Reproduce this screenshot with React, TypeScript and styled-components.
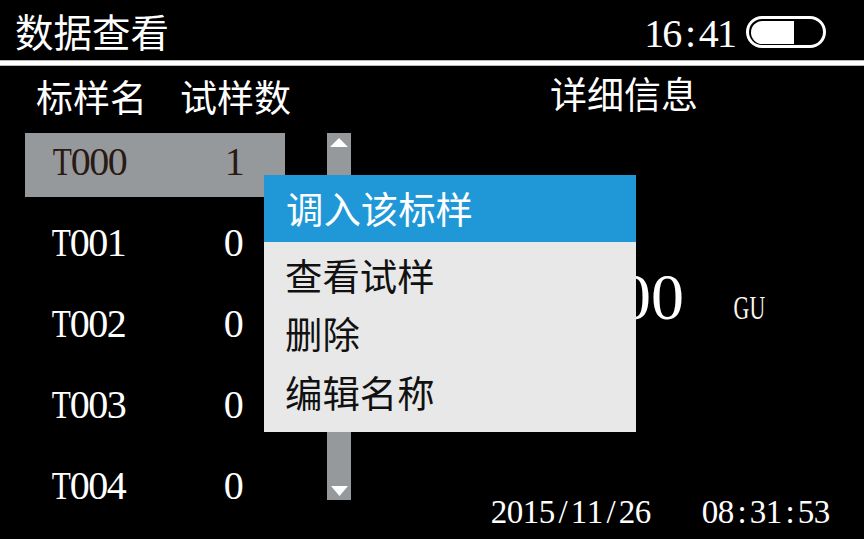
import React from 'react'
import styled, { createGlobalStyle } from 'styled-components'

const GlobalStyle = createGlobalStyle`
  html, body {
    margin: 0;
    padding: 0;
    background: #000;
  }
`

const CJK = `"Noto Sans CJK SC", "Noto Sans CJK JP", sans-serif`
const SERIF = `"Liberation Serif", "Noto Sans CJK SC", serif`

const Screen = styled.div`
  position: relative;
  width: 864px;
  height: 539px;
  overflow: hidden;
  background: #000;
  color: #fff;
  font-family: ${CJK};
  display: flex;
  flex-direction: column;
`

const Header = styled.header`
  flex: none;
  height: 60px;
  padding: 0 38px 0 15px;
  display: flex;
  align-items: center;
  justify-content: space-between;
`

const Title = styled.h1`
  margin: 0;
  font-size: 38.5px;
  font-weight: 400;
  line-height: 1;
  font-family: ${CJK};
`

const Status = styled.div`
  padding-top: 4px;
  display: flex;
  align-items: center;
  gap: 10px;
`

const Clock = styled.div`
  margin-top: 3px;
`

// the device font is fixed pitch: every character sits in a cell of the same width
const Pitch = styled.span<{ $size: number }>`
  display: inline-flex;
  font-family: ${SERIF};
  font-size: ${p => p.$size}px;
  line-height: 1;
`

const Cell = styled.span<{ $width: number }>`
  display: inline-flex;
  justify-content: center;
  width: ${p => p.$width}px;
`

const Glyph = styled.span<{ $squeeze: number }>`
  display: inline-block;
  transform: scaleX(${p => p.$squeeze});
`

const squeeze: Record<string, number> = { T: 0.78, G: 0.64, U: 0.64 }

const Mono = ({ text, size, cell }: { text: string; size: number; cell: number }) => (
  <Pitch $size={size}>
    {text.split('').map((c, i) => (
      <Cell key={i} $width={cell}>
        <Glyph $squeeze={squeeze[c] ?? 1}>{c}</Glyph>
      </Cell>
    ))}
  </Pitch>
)

const Rule = styled.div`
  flex: none;
  height: 4px;
  background: #fff;
  border-top: 1px solid #bbb;
  border-bottom: 1px solid #bbb;
`

const Body = styled.div`
  flex: 1;
  min-height: 0;
  display: flex;
`

const LeftPane = styled.section`
  width: 326px;
  margin-left: 25px;
  flex: none;
`

const ColumnHeads = styled.div`
  height: 67px;
  padding: 0 0 7px 11px;
  box-sizing: border-box;
  display: flex;
  align-items: center;
  gap: 33px;
  font-size: 37px;
  line-height: 1;
`

const ListArea = styled.div`
  display: flex;
  align-items: flex-start;
  gap: 42px;
`

const List = styled.div`
  width: 260px;
  flex: none;
  display: flex;
  flex-direction: column;
  gap: 17px;
`

const Row = styled.div<{ $selected?: boolean }>`
  height: 64px;
  padding: 0 0 6px ${p => (p.$selected ? 28 : 27)}px;
  box-sizing: border-box;
  display: grid;
  grid-template-columns: 172.5px 1fr;
  align-items: center;
  background: ${p => (p.$selected ? '#96999b' : 'transparent')};
  color: ${p => (p.$selected ? '#2a1a14' : '#fff')};
`

const ScrollBar = styled.div`
  width: 24px;
  height: 367px;
  flex: none;
  background: #96999b;
  display: flex;
  flex-direction: column;
  align-items: center;
  justify-content: space-between;
  padding: 5px 0 4px;
  box-sizing: border-box;
`

const RightPane = styled.section`
  flex: 1;
  display: flex;
  flex-direction: column;
  padding-left: 199px;
`

const DetailTitle = styled.h2`
  margin: 0;
  height: 55px;
  display: flex;
  align-items: center;
  font-size: 37px;
  font-weight: 400;
  line-height: 1;
`

const Reading = styled.div`
  margin-top: 143px;
  margin-left: 2px;
  display: flex;
  align-items: baseline;
  gap: 49px;
`

const Unit = styled.div`
  color: #fff6f0;
`

const Stamp = styled.div`
  margin-top: 166px;
  margin-left: -59px;
  display: flex;
  gap: 51px;
`

const Menu = styled.div`
  position: absolute;
  left: 264px;
  top: 175px;
  width: 372px;
  height: 257px;
  background: #e8e8e8;
  color: #111;
`

const MenuHead = styled.div`
  height: 67px;
  padding: 0 0 0 22px;
  box-sizing: border-box;
  display: flex;
  align-items: center;
  background: #2098d8;
  color: #fff;
  font-size: 37.4px;
  line-height: 1;
`

const MenuItems = styled.div`
  padding: 4px 0 0 21px;
  display: flex;
  flex-direction: column;
`

const MenuItem = styled.div`
  height: 58.5px;
  display: flex;
  align-items: center;
  font-size: 37.4px;
  line-height: 1;
`

const Battery = () => (
  <svg width="80" height="32" viewBox="0 0 80 32" fill="none">
    <rect x="1.5" y="1.5" width="77" height="29" rx="14.5" stroke="#fff" strokeWidth="3" />
    <path d="M48 5H16.5a11.5 11.5 0 0 0 0 23H48z" fill="#fff" />
  </svg>
)

const Arrow = ({ down }: { down?: boolean }) => (
  <svg width="18" height="10" viewBox="0 0 18 10">
    <path d={down ? 'M1 0H18L9.5 10z' : 'M0 9H18L9 0z'} fill="#fff" />
  </svg>
)

const rows = [
  { name: 'T000', count: '1' },
  { name: 'T001', count: '0' },
  { name: 'T002', count: '0' },
  { name: 'T003', count: '0' },
  { name: 'T004', count: '0' },
]

export default function App() {
  return (
    <Screen>
      <GlobalStyle />
      <Header>
        <Title>数据查看</Title>
        <Status>
          <Clock>
            <Mono text="16:41" size={40} cell={18.2} />
          </Clock>
          <Battery />
        </Status>
      </Header>
      <Rule />
      <Body>
        <LeftPane>
          <ColumnHeads>
            <span>标样名</span>
            <span>试样数</span>
          </ColumnHeads>
          <ListArea>
            <List>
              {rows.map((r, i) => (
                <Row key={r.name} $selected={i === 0}>
                  <Mono text={r.name} size={40} cell={18.5} />
                  <Mono text={r.count} size={40} cell={18.5} />
                </Row>
              ))}
            </List>
            <ScrollBar>
              <Arrow />
              <Arrow down />
            </ScrollBar>
          </ListArea>
        </LeftPane>
        <RightPane>
          <DetailTitle>详细信息</DetailTitle>
          <Reading>
            <Mono text="0.00" size={66} cell={33} />
            <Unit>
              <Mono text="GU" size={34} cell={16} />
            </Unit>
          </Reading>
          <Stamp>
            <Mono text="2015/11/26" size={33} cell={16} />
            <Mono text="08:31:53" size={33} cell={16} />
          </Stamp>
        </RightPane>
      </Body>
      <Menu>
        <MenuHead>调入该标样</MenuHead>
        <MenuItems>
          <MenuItem>查看试样</MenuItem>
          <MenuItem>删除</MenuItem>
          <MenuItem>编辑名称</MenuItem>
        </MenuItems>
      </Menu>
    </Screen>
  )
}
